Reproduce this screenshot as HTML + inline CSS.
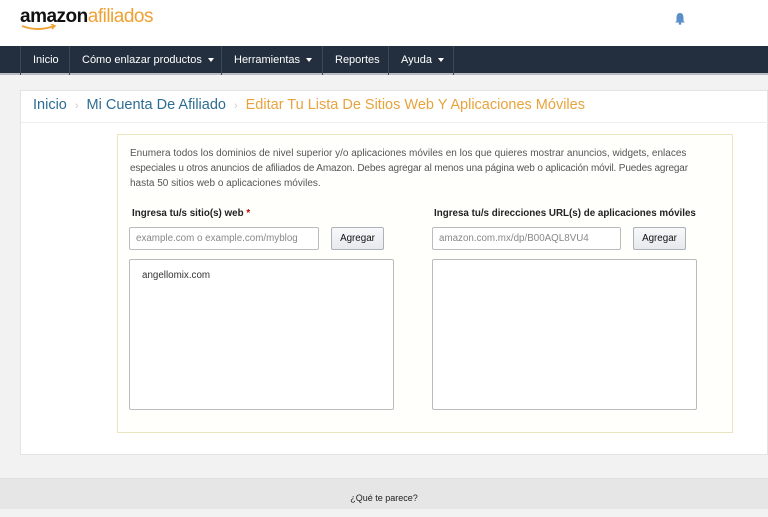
<!DOCTYPE html>
<html><head><meta charset="utf-8"><style>
*{box-sizing:border-box;margin:0;padding:0}
body{width:768px;height:509px;overflow:hidden;background:#f2f2f2;font-family:"Liberation Sans",sans-serif;position:relative;color:#333}
.hdr{position:absolute;left:0;top:0;width:768px;height:46px;background:#fff}
.logo{position:absolute;left:20px;top:6px;font-size:19px;letter-spacing:-0.5px}
.logo b{color:#111;font-weight:bold}
.logo span{color:#f0a133}
.nav{position:absolute;left:0;top:46px;width:768px;height:29px;background:#232f3e;border-bottom:2px solid #b9bcc0}
.nav div{position:absolute;top:0;height:29px;line-height:29px;color:#fff;font-size:11px;border-left:1px solid #3d4856;padding-left:12px}
.tri{display:inline-block;width:0;height:0;border-left:3px solid transparent;border-right:3px solid transparent;border-top:4px solid #fff;vertical-align:middle;margin-left:6px}
.card{position:absolute;left:20px;top:90px;width:748px;height:365px;background:#fff;border:1px solid #e3e3e3}
.bc{position:absolute;left:12px;top:6px;font-size:14.5px;color:#2e6d93}
.bc .s{color:#ccc;margin:0 8px;font-size:11px}
.bc .c{color:#e8a33d}
.bcline{position:absolute;left:0;top:31px;width:748px;border-top:1px solid #eee}
.box{position:absolute;left:96px;top:43px;width:616px;height:299px;border:1px solid #ece4bf;background:#fffffc}
.desc{position:absolute;left:12px;top:11px;width:600px;font-size:10px;line-height:15px;color:#555;white-space:nowrap}
.lbl{position:absolute;top:73px;font-size:9.8px;font-weight:bold;color:#222}
.inp{position:absolute;top:92px;height:23px;border:1px solid #bbb;border-radius:2px;font-size:9.8px;color:#888;padding:5px 6px;background:#fff}
.btn{position:absolute;top:92px;height:23px;width:53px;border:1px solid #adb1b8;border-radius:2px;background:linear-gradient(#f7f8fa,#e7e9ec);font-size:9.8px;color:#111;text-align:center;line-height:21px}
.ta{position:absolute;top:124px;height:151px;border:1px solid #bbb;border-radius:2px;background:#fff;font-size:9.8px;color:#333;padding:10px 12px}
.foot{position:absolute;left:0;top:478px;width:768px;height:31px;background:#e6e6e6;border-top:1px solid #ddd;text-align:center;font-size:9px;line-height:38px;color:#222}
</style></head><body>
<div class="hdr">
<div class="logo"><b>amazon</b><span>afiliados</span></div>
<svg style="position:absolute;left:20px;top:24px" width="40" height="8"><path d="M2 2 Q18 8 34 2" stroke="#f0a133" stroke-width="2" fill="none"/><path d="M31 0 L35 2 L32 5" stroke="#f0a133" stroke-width="1.5" fill="none"/></svg>
<svg style="position:absolute;left:674px;top:12px" width="12" height="13" viewBox="0 0 12 13"><path d="M6 1 C3 1 2.5 4 2.5 6 L2.5 9 L1 10.5 L11 10.5 L9.5 9 L9.5 6 C9.5 4 9 1 6 1Z" fill="#5b8fc7"/><circle cx="6" cy="11.5" r="1.3" fill="#5b8fc7"/></svg>
</div>
<div class="nav">
<div style="left:20px;width:49px">Inicio</div>
<div style="left:69px;width:152px">Cómo enlazar productos<span class="tri"></span></div>
<div style="left:221px;width:101px">Herramientas<span class="tri"></span></div>
<div style="left:322px;width:66px">Reportes</div>
<div style="left:388px;width:66px;border-right:1px solid #3d4856">Ayuda<span class="tri"></span></div>
</div>
<div class="card">
<div class="bc">Inicio<span class="s">›</span>Mi Cuenta De Afiliado<span class="s">›</span><span class="c">Editar Tu Lista De Sitios Web Y Aplicaciones Móviles</span></div>
<div class="bcline"></div>
<div class="box">
<div class="desc">Enumera todos los dominios de nivel superior y/o aplicaciones móviles en los que quieres mostrar anuncios, widgets, enlaces<br><span style="letter-spacing:-0.15px">especiales u otros anuncios de afiliados de Amazon. Debes agregar al menos una página web o aplicación móvil. Puedes agregar</span><br>hasta 50 sitios web o aplicaciones móviles.</div>
<div class="lbl" style="left:14px">Ingresa tu/s sitio(s) web <span style="color:#c40000">*</span></div>
<div class="lbl" style="left:316px">Ingresa tu/s direcciones URL(s) de aplicaciones móviles</div>
<div class="inp" style="left:11px;width:190px">example.com o example.com/myblog</div>
<div class="btn" style="left:213px">Agregar</div>
<div class="inp" style="left:314px;width:189px">amazon.com.mx/dp/B00AQL8VU4</div>
<div class="btn" style="left:515px">Agregar</div>
<div class="ta" style="left:11px;width:265px">angellomix.com</div>
<div class="ta" style="left:314px;width:265px"></div>
</div>
</div>
<div class="foot">¿Qué te parece?</div>
</body></html>
